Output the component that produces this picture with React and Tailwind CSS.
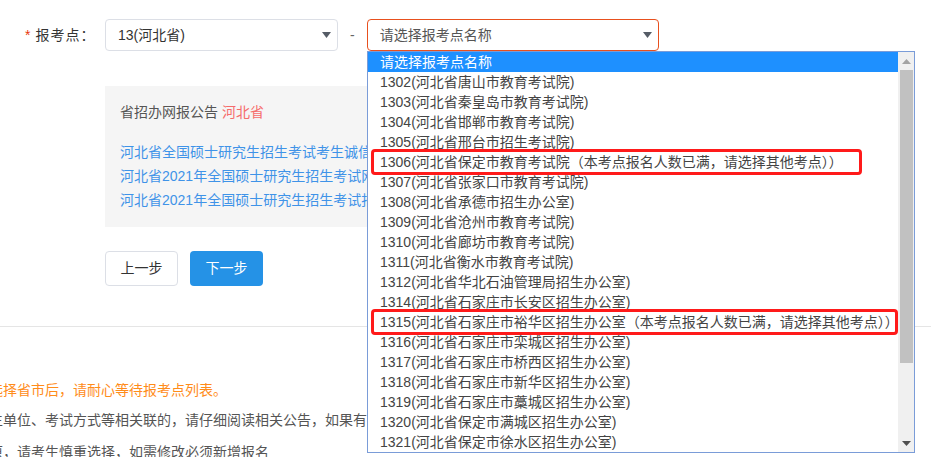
import React from 'react';

const options = [
  '1302(河北省唐山市教育考试院)',
  '1303(河北省秦皇岛市教育考试院)',
  '1304(河北省邯郸市教育考试院)',
  '1305(河北省邢台市招生考试院)',
  '1306(河北省保定市教育考试院（本考点报名人数已满，请选择其他考点））',
  '1307(河北省张家口市教育考试院)',
  '1308(河北省承德市招生办公室)',
  '1309(河北省沧州市教育考试院)',
  '1310(河北省廊坊市教育考试院)',
  '1311(河北省衡水市教育考试院)',
  '1312(河北省华北石油管理局招生办公室)',
  '1314(河北省石家庄市长安区招生办公室)',
  '1315(河北省石家庄市裕华区招生办公室（本考点报名人数已满，请选择其他考点））',
  '1316(河北省石家庄市栾城区招生办公室)',
  '1317(河北省石家庄市桥西区招生办公室)',
  '1318(河北省石家庄市新华区招生办公室)',
  '1319(河北省石家庄市藁城区招生办公室)',
  '1320(河北省保定市满城区招生办公室)',
  '1321(河北省保定市徐水区招生办公室)',
];

// red annotation boxes drawn over two rows
const marks = {
  '1306': 'left-[3px] right-[36px]',
  '1315': 'left-[3px] right-0',
};

const Caret = () => (
  <svg width="9" height="6" viewBox="0 0 9 6" className="shrink-0">
    <path d="M0 0h9L4.5 6z" fill="#555c66" />
  </svg>
);

const Dropdown = () => (
  <div className="absolute left-[367px] top-[51px] w-[548px] h-[402px] border border-[#7a9cd8] bg-white flex">
    <ul className="flex-1 overflow-hidden">
      <li className="h-[20px] leading-[20px] pl-[12px] bg-[#1e90ff] text-white whitespace-nowrap">请选择报考点名称</li>
      {options.map((o) => {
        const code = o.slice(0, 4);
        return (
          <li key={code} className="relative h-[20px] leading-[20px] pl-[12px] text-[#444] whitespace-nowrap">
            {o}
            {marks[code] && (
              <span className={`absolute -top-[3px] -bottom-[3px] ${marks[code]} border-[3px] border-[#ff1a1a] rounded-[4px]`} />
            )}
          </li>
        );
      })}
    </ul>
    <div className="w-[16px] bg-[#f0f0f0] flex flex-col items-center">
      <div className="h-[18px] flex items-center justify-center">
        <svg width="9" height="5" viewBox="0 0 9 5"><path d="M4.5 0L9 5H0z" fill="#a3a3a3" /></svg>
      </div>
      <div className="w-[13px] h-[293px] bg-[#c1c1c1]" />
      <div className="flex-1" />
      <div className="h-[18px] flex items-center justify-center">
        <svg width="9" height="5" viewBox="0 0 9 5"><path d="M0 0h9L4.5 5z" fill="#505050" /></svg>
      </div>
    </div>
  </div>
);

export default function App() {
  return (
    <div
      className="relative w-[931px] h-[457px] overflow-hidden bg-white text-[14px] text-[#333]"
      style={{ fontFamily: '"Liberation Sans", "Noto Sans CJK SC", sans-serif' }}
    >
      {/* form row */}
      <div className="flex items-center pt-[19px] h-[51px]">
        <div className="w-[105px] pl-[25px] flex items-center">
          <span className="text-[#e8380d] mr-[5px]">*</span>
          <span className="tracking-[1px]">报考点：</span>
        </div>
        <div className="w-[233px] h-[32px] border border-[#dcdfe6] rounded-[4px] flex items-center justify-between pl-[12px] pr-[6px]">
          <span>13(河北省)</span>
          <Caret />
        </div>
        <span className="ml-[12px] mr-[12px] text-[#666]">-</span>
        <div className="w-[292px] h-[32px] border border-[#e8501e] rounded-[4px] flex items-center justify-between pl-[12px] pr-[6px]">
          <span className="text-[#555]">请选择报考点名称</span>
          <Caret />
        </div>
      </div>

      {/* notice box */}
      <div className="ml-[105px] mt-[35px] w-[560px] bg-[#f5f5f5] pl-[15px] pt-[16px] pb-[15px]">
        <div className="leading-[20px] text-[#555]">
          省招办网报公告 <span className="text-[#f56c6c]">河北省</span>
        </div>
        <div className="mt-[18px] text-[#3f93e8] whitespace-nowrap">
          <div className="leading-[24px]">河北省全国硕士研究生招生考试考生诚信考试承诺书</div>
          <div className="leading-[24px]">河北省2021年全国硕士研究生招生考试网上报名公告</div>
          <div className="leading-[24px]">河北省2021年全国硕士研究生招生考试报考须知</div>
        </div>
      </div>

      {/* buttons */}
      <div className="ml-[105px] mt-[24px] flex gap-[12px]">
        <button className="w-[73px] h-[35px] border border-[#dcdfe6] rounded-[4px] bg-white text-[#333]">上一步</button>
        <button className="w-[73px] h-[35px] rounded-[4px] bg-[#2592e6] text-white">下一步</button>
      </div>

      <div className="mt-[40px] border-t border-[#e5e5e5]" />

      {/* tips */}
      <div className="-ml-[11px] mt-[53px] whitespace-nowrap">
        <div className="leading-[20px] text-[#ff8c1a]">选择省市后，请耐心等待报考点列表。</div>
        <div className="leading-[20px] mt-[10px] text-[#555]">生单位、考试方式等相关联的，请仔细阅读相关公告，如果有</div>
        <div className="leading-[20px] mt-[12px] text-[#555]">原，请考生慎重选择，如需修改必须新增报名</div>
      </div>

      <Dropdown />
    </div>
  );
}
